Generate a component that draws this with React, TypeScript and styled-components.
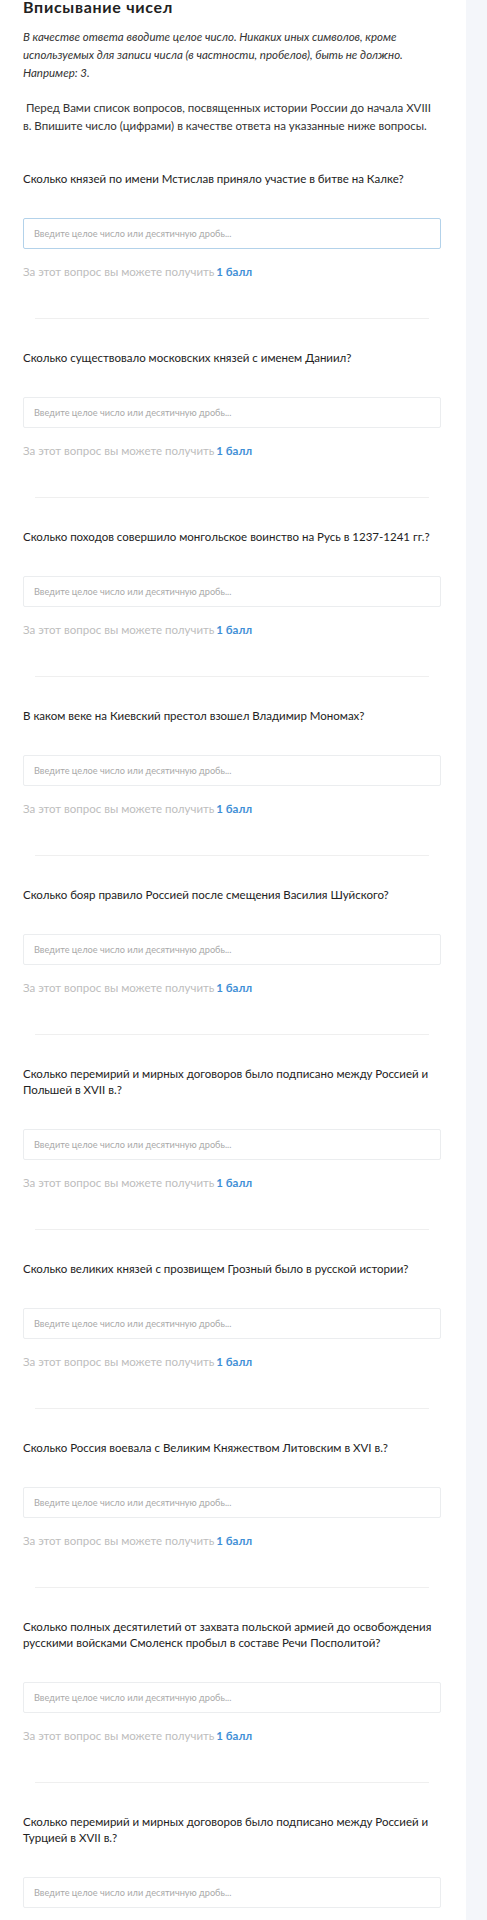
import React from "react";
import styled, { createGlobalStyle } from "styled-components";

const Global = createGlobalStyle`
  html, body { margin: 0; padding: 0; background: #ffffff; }
  body { font-family: Lato, "Noto Sans", sans-serif; color: #222; }
  * { box-sizing: border-box; }
`;

const Page = styled.div`
  display: flex;
  min-height: 1920px;
  width: 487px;
`;

const Main = styled.main`
  flex: 1;
  padding: 0 25px 0 23px;
`;

const Aside = styled.aside`
  width: 21px;
  flex-shrink: 0;
  background: #f4f6fa;
`;

const Title = styled.h2`
  margin: 0;
  font-size: 16px;
  line-height: 14px;
  font-weight: 700;
  letter-spacing: 0.7px;
  color: #222;
`;

const Note = styled.p`
  margin: 13.5px 0 0;
  font-size: 11.5px;
  line-height: 18.3px;
  font-style: italic;
  color: #333;
`;

const Intro = styled.p`
  margin: 16.7px 0 0;
  font-size: 11.5px;
  line-height: 18.3px;
  color: #333;
`;

const List = styled.div`
  margin-top: 35px;
`;

const Item = styled.section`
  display: flex;
  flex-direction: column;
`;

const Question = styled.div`
  font-size: 11.5px;
  line-height: 16px;
  color: #222;
`;

const Input = styled.input<{ $focused?: boolean }>`
  margin-top: 31px;
  height: 31px;
  width: 100%;
  padding: 0 10px;
  border: 1px solid ${(p) => (p.$focused ? "#b3d2ea" : "#ebedef")};
  border-radius: 2px;
  background: #fff;
  font-family: Lato, "Noto Sans", sans-serif;
  font-size: 9.2px;
  outline: none;
  &::placeholder { color: #a9a9a9; }
`;

const Points = styled.div`
  margin-top: 15px;
  font-size: 11.5px;
  line-height: 16px;
  color: #bdbdbd;
`;

const Score = styled.span`
  color: #3f8fd6;
  font-weight: 700;
  margin-left: 2px;
`;

const Divider = styled.hr`
  border: 0;
  height: 1px;
  background: #efefef;
  margin: 38px 12px 31px;
`;

const questions: React.ReactNode[] = [
  "Сколько князей по имени Мстислав приняло участие в битве на Калке?",
  "Сколько существовало московских князей с именем Даниил?",
  "Сколько походов совершило монгольское воинство на Русь в 1237-1241 гг.?",
  "В каком веке на Киевский престол взошел Владимир Мономах?",
  "Сколько бояр правило Россией после смещения Василия Шуйского?",
  <>Сколько перемирий и мирных договоров было подписано между Россией и<br />Польшей в XVII в.?</>,
  "Сколько великих князей с прозвищем Грозный было в русской истории?",
  "Сколько Россия воевала с Великим Княжеством Литовским в XVI в.?",
  <>Сколько полных десятилетий от захвата польской армией до освобождения<br />русскими войсками Смоленск пробыл в составе Речи Посполитой?</>,
  <>Сколько перемирий и мирных договоров было подписано между Россией и<br />Турцией в XVII в.?</>,
];

export default function App() {
  return (
    <>
      <Global />
      <Page>
        <Main>
          <Title>Вписывание чисел</Title>
          <Note>
            В качестве ответа вводите целое число. Никаких иных символов, кроме<br />
            используемых для записи числа (в частности, пробелов), быть не должно.<br />
            Например: 3.
          </Note>
          <Intro>
            &nbsp;Перед Вами список вопросов, посвященных истории России до начала XVIII<br />
            в. Впишите число (цифрами) в качестве ответа на указанные ниже вопросы.
          </Intro>
          <List>
            {questions.map((q, i) => (
              <Item key={i}>
                <Question>{q}</Question>
                <Input $focused={i === 0} placeholder="Введите целое число или десятичную дробь..." />
                {i < questions.length - 1 && (
                  <>
                    <Points>
                      За этот вопрос вы можете получить<Score>1 балл</Score>
                    </Points>
                    <Divider />
                  </>
                )}
              </Item>
            ))}
          </List>
        </Main>
        <Aside />
      </Page>
    </>
  );
}
